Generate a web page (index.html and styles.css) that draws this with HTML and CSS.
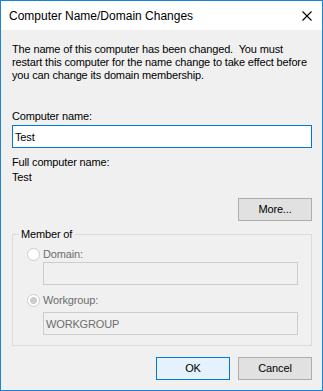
FILE: index.html
```html
<!DOCTYPE html>
<html lang="en">
<head>
    <meta charset="UTF-8">
    <meta name="viewport" content="width=device-width, initial-scale=1.0">
    <title>Computer Name/Domain Changes</title>
    <link rel="stylesheet" href="styles.css">
</head>
<body>
    <div class="window">
        <div class="titlebar">
            <span class="title">Computer Name/Domain Changes</span>
            <svg class="close" width="10" height="10" viewBox="0 0 10 10">
                <path d="M0.5 0.5 L9.5 9.5 M9.5 0.5 L0.5 9.5" stroke="#000" stroke-width="1.1" fill="none"/>
            </svg>
        </div>

        <div class="content">
            <p class="message">The name of this computer has been changed.&nbsp; You must<br>restart this computer for the name change to take effect before<br>you can change its domain membership.</p>

            <label class="field-label" for="computerName">Computer name:</label>
            <input class="name-input" id="computerName" type="text" value="Test">

            <div class="full-label">Full computer name:</div>
            <div class="full-value">Test</div>

            <div class="more-row">
                <button class="btn">More...</button>
            </div>

            <fieldset class="group">
                <legend>Member of</legend>
                <div class="group-body">
                    <label class="radio-row">
                        <input class="radio" type="radio" name="member" disabled>
                        <span>Domain:</span>
                    </label>
                    <input class="text-box" type="text" value="" disabled>

                    <label class="radio-row second">
                        <input class="radio" type="radio" name="member" checked disabled>
                        <span>Workgroup:</span>
                    </label>
                    <input class="text-box second" type="text" value="WORKGROUP" disabled>
                </div>
            </fieldset>

            <div class="actions">
                <button class="btn btn-default">OK</button>
                <button class="btn">Cancel</button>
            </div>
        </div>
    </div>
</body>
</html>
```

FILE: styles.css
```css
body {
    margin: 0;
    font-family: 'Liberation Sans', Arial, sans-serif;
    font-size: 11px;
    line-height: 13px;
    color: #000;
    background-color: #fff;
}
.window {
    width: 323px;
    height: 391px;
    box-sizing: border-box;
    border: 1px solid #1883d7;
    background-color: #f0f0f0;
}
.titlebar {
    height: 29px;
    background-color: #fff;
    display: flex;
    align-items: center;
    justify-content: space-between;
    padding: 0 10px 0 8px;
    font-size: 12px;
}
.title {
    padding-top: 1px;
}
.content {
    padding: 13px 10px 0 11px;
    letter-spacing: -0.15px;
}
.message {
    margin: 0;
}
.field-label {
    display: block;
    margin-top: 28px;
}
.name-input {
    display: block;
    width: 300px;
    height: 23px;
    margin-top: 2px;
    box-sizing: border-box;
    border: 1px solid #0078d7;
    padding: 0 2px;
    font: inherit;
    letter-spacing: inherit;
    color: #000;
    background-color: #fff;
    outline: none;
}
.full-label {
    margin-top: 8px;
}
.full-value {
    margin-top: 2px;
}
.more-row {
    display: flex;
    justify-content: flex-end;
    margin-top: 14px;
}
.btn {
    width: 74px;
    height: 23px;
    box-sizing: border-box;
    border: 1px solid #adadad;
    background-color: #e1e1e1;
    font: inherit;
    letter-spacing: inherit;
    color: #000;
    padding: 0;
}
.btn-default {
    border-color: #0078d7;
    background-color: #e5f1fb;
}
.group {
    margin: 7px 0 0;
    padding: 0 13px 10px 6px;
    border: 1px solid #dcdcdc;
}
.group legend {
    padding: 0 2px;
}
.group-body {
    padding: 7px 0 0 8px;
}
.radio-row {
    display: flex;
    align-items: center;
    gap: 3px;
    height: 13px;
    color: #6d6d6d;
}
.radio-row.second {
    margin-top: 9px;
}
.radio {
    appearance: none;
    margin: 0;
    width: 13px;
    height: 13px;
    box-sizing: border-box;
    border: 1px solid #cccccc;
    border-radius: 50%;
    background-color: #fff;
}
.radio:checked {
    background: radial-gradient(circle, #cccccc 3.2px, #fff 3.8px);
}
.text-box {
    display: block;
    width: calc(100% - 16px);
    height: 23px;
    margin: 1px 0 0 16px;
    box-sizing: border-box;
    border: 1px solid #cccccc;
    padding: 0 2px;
    font: inherit;
    letter-spacing: inherit;
    color: #6d6d6d;
    background-color: #f0f0f0;
}
.text-box.second {
    margin-top: 5px;
}
.actions {
    display: flex;
    justify-content: flex-end;
    gap: 8px;
    margin-top: 11px;
}
```
